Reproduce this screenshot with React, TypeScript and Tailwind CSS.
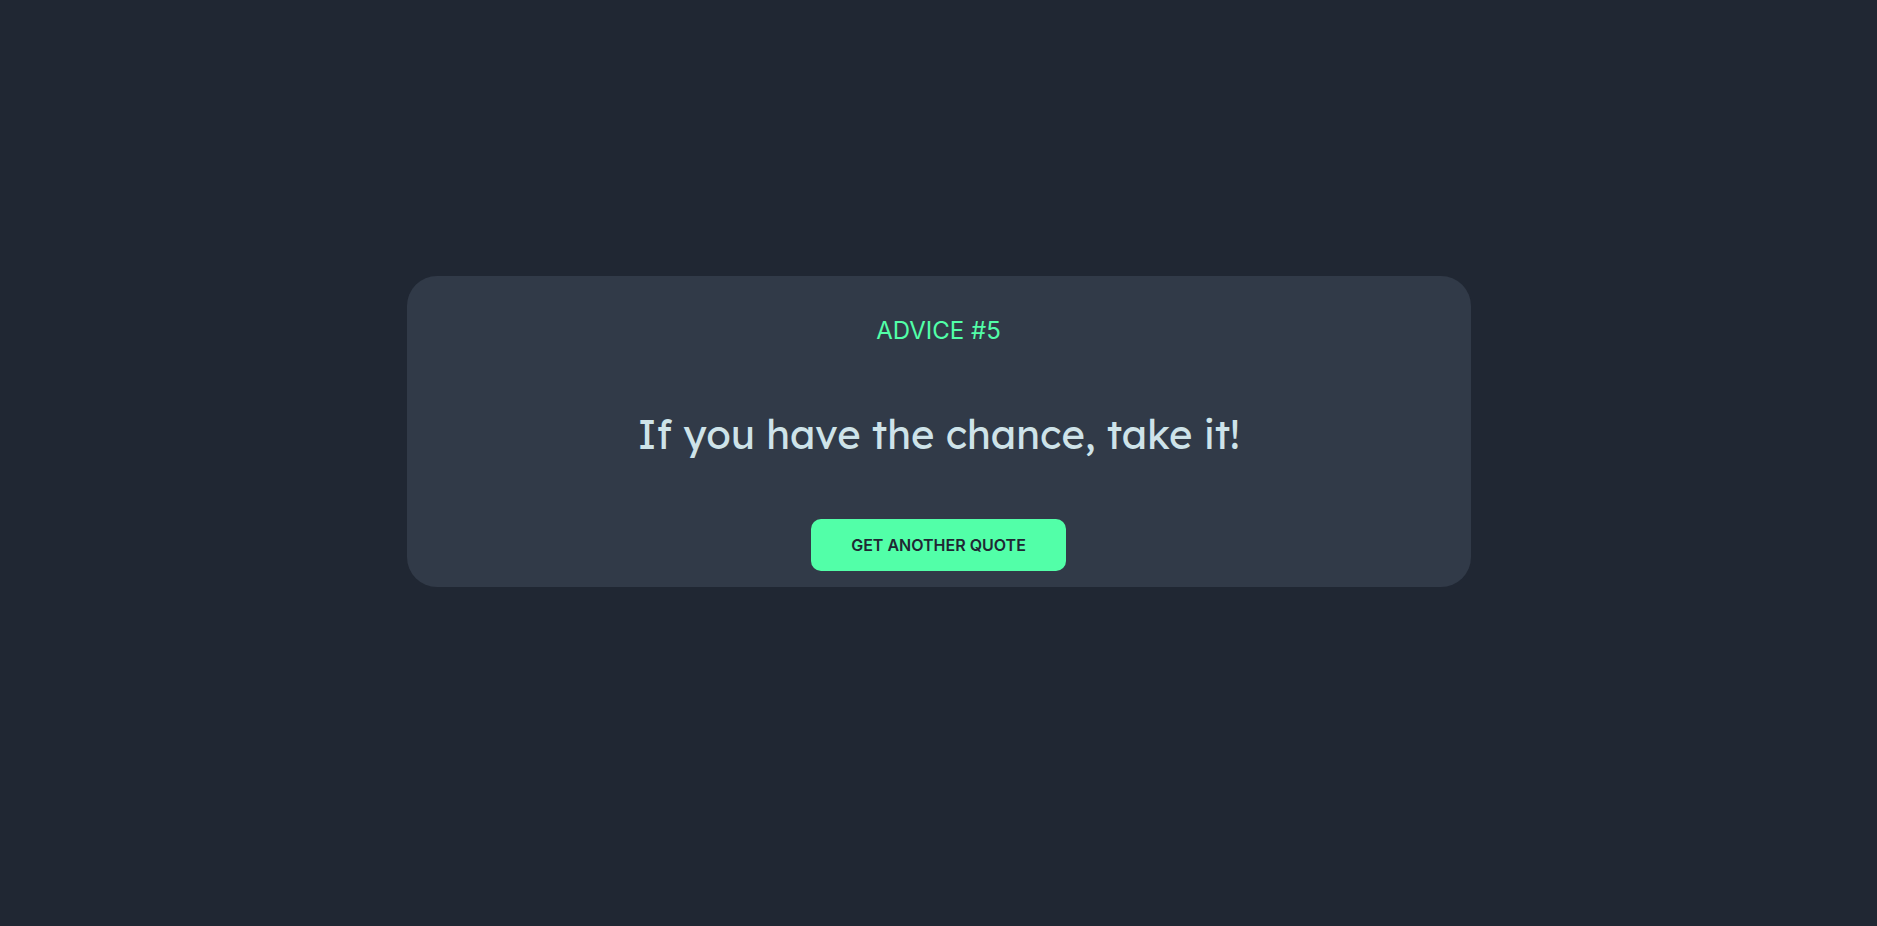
export default function App() {
  return (
    <main className="flex min-h-screen flex-col items-center justify-center bg-[#202733] px-4 pb-[63px]">
      <section className="flex w-full max-w-[1064px] flex-col items-center gap-[60px] rounded-[30px] bg-[#313a48] px-8 pt-[37px] pb-4 text-center">
        <h1 className="font-['Inter',sans-serif] text-2xl leading-9 text-[#52ffa8]">ADVICE #5</h1>
        <p className="font-['Lexend','Lato',sans-serif] text-[40px] leading-[50px] text-[#cee3e9]">If you have the chance, take it!</p>
        <button type="button" className="rounded-[10px] bg-[#52ffa8] px-10 py-[14px] font-['Inter',sans-serif] text-base leading-6 font-semibold text-[#202733]">GET ANOTHER QUOTE</button>
      </section>
    </main>
  );
}
